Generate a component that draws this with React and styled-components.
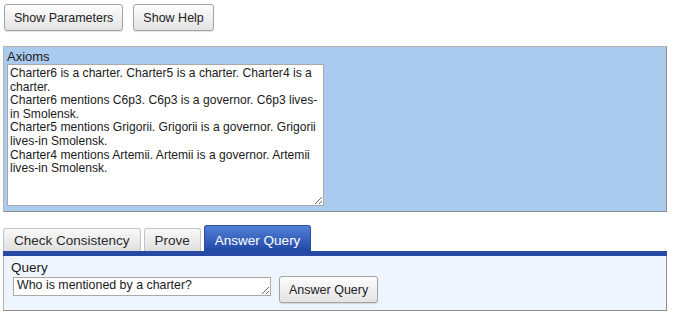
import React, { useState } from 'react';
import styled, { createGlobalStyle } from 'styled-components';

const GlobalStyle = createGlobalStyle`
  body {
    margin: 0;
    background: #fff;
    font-family: "Liberation Sans", Arial, sans-serif;
    color: #222;
  }
`;

const Page = styled.div`
  padding: 4px 0 0 3px;
  width: 664px;
`;

const Toolbar = styled.div`
  display: flex;
  gap: 10px;
  margin-left: 1px;
`;

const Button = styled.button`
  height: 27px;
  padding: 0 9px;
  border: 1px solid #a3a3a3;
  border-radius: 3px;
  background: linear-gradient(#fdfdfd, #e3e3e3);
  box-shadow: 0 1px 1px rgba(0, 0, 0, 0.12);
  font-family: "Liberation Sans", Arial, sans-serif;
  font-size: 12.5px;
  color: #222;
  cursor: pointer;
`;

const AxiomPanel = styled.section`
  margin-top: 15px;
  box-sizing: border-box;
  height: 166px;
  padding: 2px 3px 6px 2px;
  background: #aacbee;
  border: 1px solid #b3b3b3;
  border-right-color: #8e8e8e;
  border-bottom-color: #8e8e8e;
`;

const Label = styled.div`
  font-size: ${p => p.$size || 13}px;
  line-height: 15px;
  padding-left: 1px;
  color: #1a1a1a;
`;

const AxiomText = styled.textarea`
  display: block;
  box-sizing: border-box;
  width: 317px;
  height: 142px;
  margin: 0 0 0 1px;
  padding: 2px;
  border: 1px solid #a9a9a9;
  font-family: "Liberation Sans", Arial, sans-serif;
  font-size: 12.1px;
  line-height: 13.6px;
  color: #1a1a1a;
  background: #fff;
  outline: none;
`;

const TabBar = styled.div`
  margin-top: 13px;
  display: flex;
  align-items: flex-end;
  gap: 3px;
  border-bottom: 5px solid #2849a3;
`;

const Tab = styled.button`
  box-sizing: border-box;
  height: ${p => (p.$active ? 26 : 23)}px;
  padding: ${p => (p.$active ? '3px' : '0')} 10px 0;
  border: 1px solid ${p => (p.$active ? '#2b4ea8' : '#c4c4c4')};
  border-bottom: none;
  border-radius: 3px 3px 0 0;
  background: ${p =>
    p.$active ? 'linear-gradient(#5381d6, #2147a5)' : 'linear-gradient(#f9f9f9, #dfdfdf)'};
  color: ${p => (p.$active ? '#fff' : '#2a2a2a')};
  font-family: "Liberation Sans", Arial, sans-serif;
  font-size: 13.5px;
  cursor: pointer;
`;

const QueryPanel = styled.section`
  box-sizing: border-box;
  height: 55px;
  padding: 4px 0 0 6px;
  background: #eef5fd;
  border: 1px solid #b3b3b3;
  border-top: none;
  border-right-color: #8e8e8e;
  border-bottom-color: #8e8e8e;
`;

const QueryRow = styled.div`
  display: flex;
  align-items: flex-start;
  gap: 8px;
  margin-top: 1px;
`;

const QueryInput = styled.textarea`
  box-sizing: border-box;
  width: 258px;
  height: 19px;
  margin: 1px 0 0 3px;
  padding: 1px 3px;
  border: 1px solid #a9a9a9;
  font-family: "Liberation Sans", Arial, sans-serif;
  font-size: 12.4px;
  line-height: 13.6px;
  color: #1a1a1a;
  background: #fff;
  outline: none;
  overflow: hidden;
`;

const axioms = [
  'Charter6 is a charter. Charter5 is a charter. Charter4 is a charter.',
  'Charter6 mentions C6p3. C6p3 is a governor. C6p3 lives-in Smolensk.',
  'Charter5 mentions Grigorii. Grigorii is a governor. Grigorii lives-in Smolensk.',
  'Charter4 mentions Artemii. Artemii is a governor. Artemii lives-in Smolensk.',
].join('\n');

const tabs = ['Check Consistency', 'Prove', 'Answer Query'];

export default function App() {
  const [active, setActive] = useState('Answer Query');

  return (
    <Page>
      <GlobalStyle />
      <Toolbar>
        <Button>Show Parameters</Button>
        <Button>Show Help</Button>
      </Toolbar>

      <AxiomPanel>
        <Label>Axioms</Label>
        <AxiomText defaultValue={axioms} spellCheck={false} />
      </AxiomPanel>

      <TabBar>
        {tabs.map(t => (
          <Tab key={t} $active={t === active} onClick={() => setActive(t)}>
            {t}
          </Tab>
        ))}
      </TabBar>

      <QueryPanel>
        <Label $size={13.5}>Query</Label>
        <QueryRow>
          <QueryInput defaultValue="Who is mentioned by a charter?" spellCheck={false} />
          <Button>Answer Query</Button>
        </QueryRow>
      </QueryPanel>
    </Page>
  );
}
